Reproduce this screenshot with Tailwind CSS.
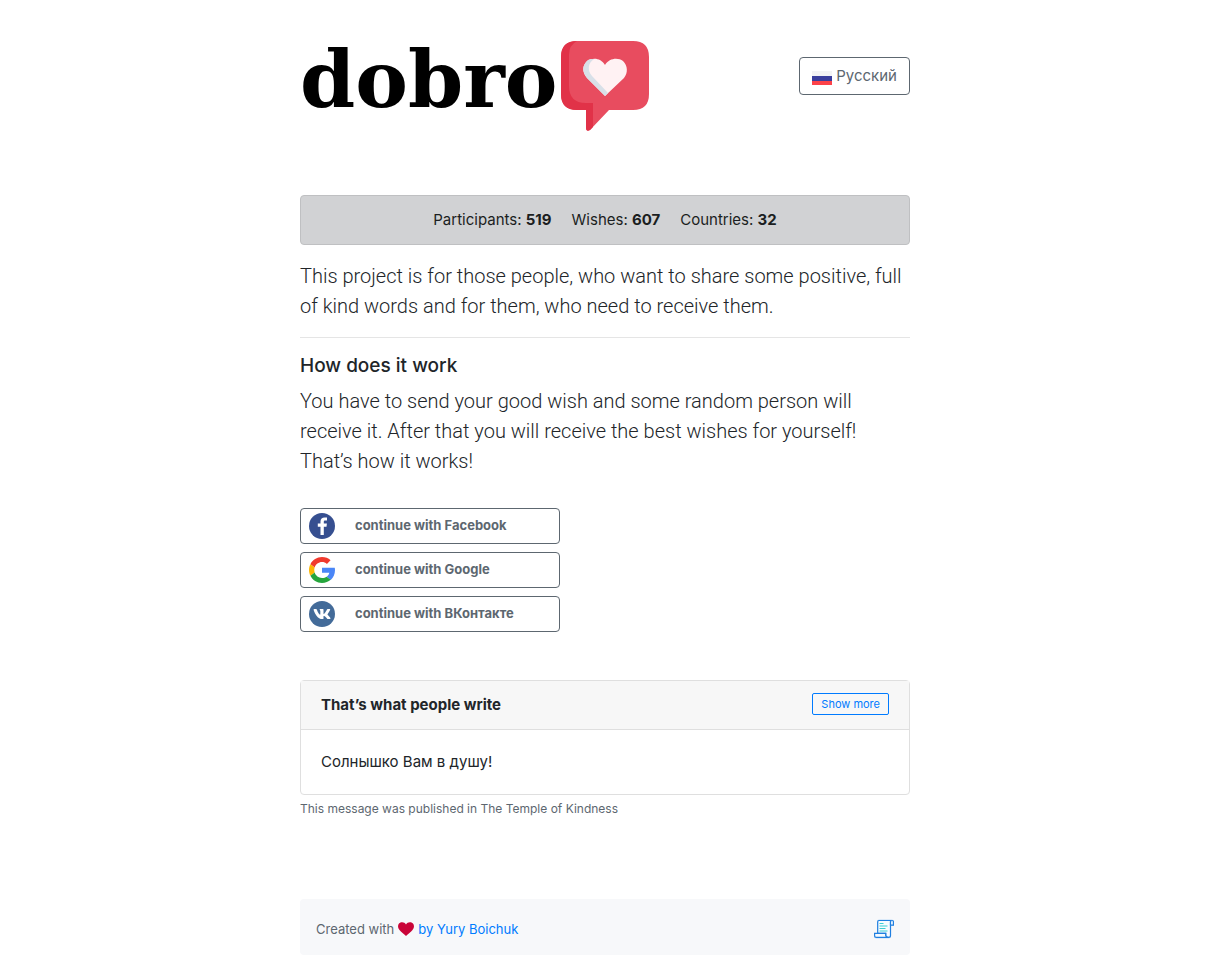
<!DOCTYPE html>
<html lang="en">
<head>
  <meta charset="UTF-8" />
  <meta name="viewport" content="width=device-width, initial-scale=1.0" />
  <title>Dobro</title>
  <script src="https://cdn.jsdelivr.net/npm/@tailwindcss/browser@4"></script>
</head>
<body class="bg-white pr-5 font-['Inter','Liberation_Sans',sans-serif] text-[15px] leading-6 text-[#212529]">
  <div class="mx-auto w-full max-w-[610px]">

    <!-- Header -->
    <header class="flex items-start justify-between pt-10">
      <a href="#" class="flex items-start gap-1" aria-label="dobro">
        <span class="font-['DejaVu_Serif',serif] text-[79px] leading-[80px] font-bold text-black">dobro</span>
        <svg class="mt-px h-[90px] w-[88px] shrink-0" viewBox="0 0 88 90" aria-hidden="true">
          <path fill="#e84c5f" d="M16 0H72Q88 0 88 16V53Q88 69 72 69H48L29 89Q25 91 25 87V69H16Q0 69 0 53V16Q0 0 16 0Z" />
          <path fill="#e13248" d="M16 0Q8 4 8 14V45Q8 62 25 62H32V86L29 89Q25 91 25 87V69H16Q0 69 0 53V16Q0 0 16 0Z" />
          <path fill="#fff2f3" d="M44 24C48 17 57 16 62 20C67 25 67 32 63 37L44 55L26 37C21 31 21 25 26 20C32 16 40 17 44 24Z" />
          <path fill="#d8e0e8" d="M33 18C27 22 26 29 31 35L47 52L44 55L26 37C21 31 21 25 26 20C28 18 30 18 33 18Z" />
        </svg>
      </a>
      <button type="button" class="mt-[17px] flex h-[38px] items-center gap-1 rounded border border-[#5d6770] px-3 text-[#5d6770]">
        <svg class="mt-1 h-[14px] w-5" viewBox="0 0 20 14" aria-hidden="true">
          <path fill="#f3f3f4" d="M0 0h20v5H0z" />
          <path fill="#3a3f9c" d="M0 5h20v5H0z" />
          <path fill="#fc4249" d="M0 10h20v4H0z" />
        </svg>
        Русский
      </button>
    </header>

    <!-- Counters -->
    <div class="mt-16 flex items-center justify-center gap-5 rounded border border-[#bfc0c2] bg-[#d1d2d4] py-3 text-[#1b1e21]">
      <span>Participants: <b>519</b></span>
      <span>Wishes: <b>607</b></span>
      <span>Countries: <b>32</b></span>
    </div>

    <p class="mt-4 font-['Roboto',sans-serif] text-xl leading-[30px] font-light">This project is for those people, who want to share some positive, full of kind words and for them, who need to receive them.</p>
    <hr class="my-4 border-black/10" />
    <h5 class="mb-2 text-[19px] leading-6 font-medium">How does it work</h5>
    <p class="font-['Roboto',sans-serif] text-xl leading-[30px] font-light">You have to send your good wish and some random person will receive it. After that you will receive the best wishes for yourself! That’s how it works!</p>

    <!-- Login buttons -->
    <div class="mt-8 flex max-w-[260px] flex-col gap-2 text-[13px] font-bold text-[#5d6770]">
      <button type="button" class="flex h-9 items-center gap-5 rounded-sm border border-[#5d6770] px-2 text-left">
        <svg class="h-[26px] w-[26px]" viewBox="0 0 26 26" aria-hidden="true">
          <circle cx="13" cy="13" r="13" fill="#364f90" />
          <path fill="#fff" d="M14.8 22v-8.200h2.700l.4-3.200h-3.100V8.800c0-.9.4-1.400 1.600-1.400h1.600V4.500c-.4 0-1.300-.1-2.300-.1-2.600 0-4.200 1.500-4.200 4.100v2.100H8.800v3.200h2.700V22z" />
        </svg>
        <span class="pb-0.5">continue with Facebook</span>
      </button>
      <button type="button" class="flex h-9 items-center gap-5 rounded-sm border border-[#5d6770] px-2 text-left">
        <svg class="h-[26px] w-[26px]" viewBox="2 2 44 44" aria-hidden="true">
          <path fill="#f03a2e" d="M24 10.500c3.200 0 6 1.100 8.300 3.200l6.200-6.200C34.700 4 29.800 2 24 2 15.400 2 8 6.900 4.400 14.100l7.200 5.600C13.300 14.400 18.200 10.500 24 10.500z" />
          <path fill="#4a86f7" d="M46 24.500c0-1.600-.2-3.100-.4-4.500H24v8.600h12.400c-.6 2.800-2.200 5.200-4.600 6.800l7 5.500C43.100 36.900 46 31.200 46 24.500z" />
          <path fill="#fbb505" d="M11.600 28.300c-.4-1.400-.7-2.800-.7-4.300s.2-3 .7-4.300l-7.200-5.600C2.900 17.100 2 20.500 2 24s.9 6.900 2.400 9.900z" />
          <path fill="#26a53d" d="M24 46c5.900 0 10.900-2 14.800-5.300l-7-5.400c-2 1.400-4.500 2.200-7.800 2.200-5.800 0-10.700-3.900-12.400-9.200l-7.200 5.600C8 41.100 15.400 46 24 46z" />
        </svg>
        <span class="pb-0.5">continue with Google</span>
      </button>
      <button type="button" class="flex h-9 items-center gap-5 rounded-sm border border-[#5d6770] px-2 text-left">
        <svg class="h-[26px] w-[26px]" viewBox="0 0 26 26" aria-hidden="true">
          <circle cx="13" cy="13" r="13" fill="#436b99" />
          <path fill="#fff" transform="translate(4 5) scale(.0315)" d="M545 117.700c3.700-12.500 0-21.700-17.800-21.700h-58.900c-15 0-21.900 7.900-25.600 16.700 0 0-30 73.100-72.400 120.500-13.700 13.700-20 18.100-27.500 18.100-3.700 0-9.400-4.400-9.400-16.900V117.700c0-15-4.200-21.700-16.600-21.700h-92.600c-9.400 0-15 7-15 13.500 0 14.200 21.200 17.500 23.400 57.500v86.800c0 19-3.400 22.500-10.900 22.500-20 0-68.600-73.400-97.400-157.400-5.800-16.300-11.500-22.900-26.600-22.900H38.800c-16.800 0-20.200 7.900-20.200 16.700 0 15.600 20 93.100 93.100 195.500C160.400 378.100 229 416 291.400 416c37.500 0 42.100-8.400 42.100-22.900 0-66.800-3.400-73.100 15.400-73.100 8.700 0 23.700 4.400 58.700 38.100 40 40 46.600 57.900 69 57.900h58.900c16.800 0 25.300-8.400 20.400-25-11.200-34.900-86.900-106.700-90.300-111.500-8.700-11.200-6.200-16.200 0-26.200.1-.1 72-101.300 79.400-135.600z" />
        </svg>
        <span class="pb-0.5">continue with ВКонтакте</span>
      </button>
    </div>

    <!-- Latest wish -->
    <section class="mt-12 rounded border border-[#dfdfdf]">
      <div class="flex items-start justify-between border-b border-[#dfdfdf] bg-[#f7f7f7] px-5 py-3">
        <h6 class="font-bold">That’s what people write</h6>
        <button type="button" class="flex h-[22px] items-center rounded-xs border border-[#007bff] px-2 pb-px text-[11px] text-[#007bff]">Show more</button>
      </div>
      <p class="p-5">Солнышко Вам в душу!</p>
    </section>
    <p class="mt-1 text-[12px] leading-5 text-[#5d6770]">This message was published in The Temple of Kindness</p>

    <!-- Footer -->
    <footer class="mt-20 mb-4 flex h-14 items-center justify-between rounded bg-[#f7f8fa] px-4 pt-1 text-[13px] text-[#5d6770]">
      <p class="flex items-center gap-1">
        Created with
        <svg class="h-[14px] w-4" viewBox="0 0 16 14" aria-label="love">
          <path fill="#c90438" d="M8 2.500C9.500-.3 13-.6 15 1.500c1.500 2 1.200 4.500-.5 6.500C13 10 10 12 8 14 6 12 3 10 1.500 8-.2 6-.5 3.500 1 1.500 3-.6 6.500-.3 8 2.500z" />
        </svg>
        <a href="#" class="text-[#007bff]">by Yury Boichuk</a>
      </p>
      <a href="#" aria-label="Changelog">
        <svg class="h-5 w-5" viewBox="0 0 20 20" fill="none" aria-hidden="true">
          <path fill="#bfdcf8" d="M3 2.500Q3 .5 5 .5H18Q20 .5 20 3V7H17V17Q17 19.500 14.500 19.500H2.500Q0 19.500 0 17V14H3Z" />
          <path fill="#f7fbff" stroke="#1f7fe0" stroke-width="1.200" d="M3.700 14.300V3Q3.700 1.500 5 1.500H16.500V16.500Q16.500 18.400 14.500 18.400Q12 18.400 11.700 16.500V14.300Z" />
          <path fill="#f7fbff" stroke="#1f7fe0" stroke-width="1.200" d="M16.500 6.200V3Q16.500 1.500 18 1.500T19.400 3V6.200ZM14.500 18.400H2.500Q.6 18.400.6 16.500V14.300H11.700V16.500Q12 18.400 14.500 18.400Z" />
          <path stroke="#3ccfd3" stroke-width="1.200" d="M5.500 4.500h4M5.500 7h8M5.500 9.500h6M5.500 12h8" />
        </svg>
      </a>
    </footer>
  </div>
</body>
</html>
